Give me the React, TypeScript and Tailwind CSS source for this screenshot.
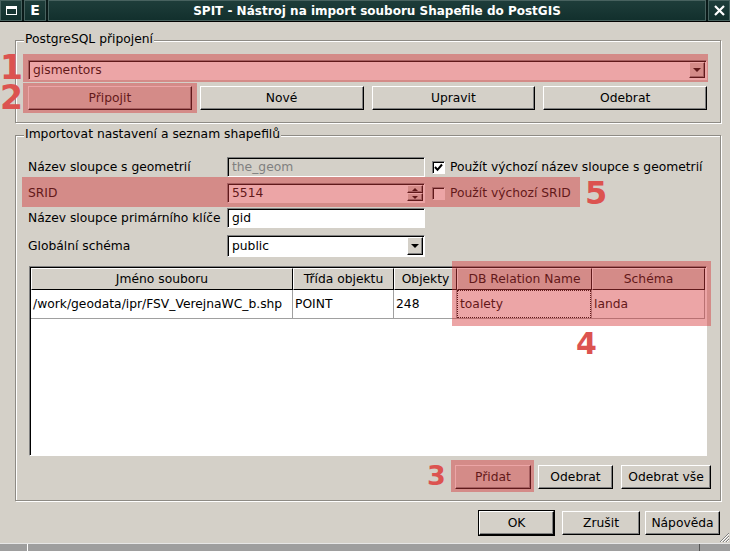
import React from 'react';
import clsx from 'clsx';

// win2k-ish bevels used all over the dialog
const raised =
  'bg-[#d4d0c8] border border-t-white border-l-white border-b-black border-r-black shadow-[inset_-1px_-1px_0_#808080]';
const sunken =
  'border border-t-[#808080] border-l-[#808080] border-b-white border-r-white shadow-[inset_1px_1px_0_#000]';

function Button({ label, className }: { label: string; className?: string }) {
  return (
    <button className={clsx('flex h-[24px] items-center justify-center', raised, className)}>
      {label}
    </button>
  );
}

function DownArrow() {
  return <span className="h-0 w-0 border-x-[4px] border-t-[4px] border-x-transparent border-t-black" />;
}

function Combo({ value, className }: { value: string; className?: string }) {
  return (
    <div className={clsx('flex items-center bg-white p-[1px]', sunken, className)}>
      <span className="flex-1 pl-[3px]">{value}</span>
      <span className={clsx('flex h-full w-[16px] items-center justify-center', raised)}>
        <DownArrow />
      </span>
    </div>
  );
}

function GroupBox({ title, className, children }: { title: string; className?: string; children: React.ReactNode }) {
  return (
    <div
      className={clsx(
        'relative border border-[#8e8b85] shadow-[inset_1px_1px_0_#fff,1px_1px_0_#fff]',
        className
      )}
    >
      <span className="absolute -top-[9px] left-[8px] bg-[#d4d0c8] px-[1px] leading-[15px]">{title}</span>
      {children}
    </div>
  );
}

function Checkbox({ checked }: { checked?: boolean }) {
  return (
    <span className={clsx('flex h-[13px] w-[13px] items-center justify-center bg-white', sunken)}>
      {checked && (
        <svg width="9" height="9" viewBox="0 0 9 9">
          <path d="M1 4 L3.5 6.8 L8 1.5" stroke="#000" strokeWidth="2" fill="none" />
        </svg>
      )}
    </span>
  );
}

const columns = [
  { title: 'Jméno souboru', w: 'w-[262px]', value: '/work/geodata/ipr/FSV_VerejnaWC_b.shp' },
  { title: 'Třída objektu', w: 'w-[101px]', value: 'POINT' },
  { title: 'Objekty', w: 'w-[63px]', value: '248' },
  { title: 'DB Relation Name', w: 'w-[135px]', value: 'toalety', focus: true },
  { title: 'Schéma', w: 'flex-1', value: 'landa' },
];

function Table() {
  return (
    <div className={clsx('ml-[1px] flex h-[190px] flex-col bg-white p-[1px]', sunken)}>
      <div className="flex h-[22px] shrink-0">
        {columns.map((c) => (
          <div
            key={c.title}
            className={clsx('flex items-center justify-center border-t border-l border-white border-r border-b border-r-black border-b-black bg-[#d4d0c8]', c.w)}
          >
            {c.title}
          </div>
        ))}
      </div>
      <div className="flex h-[29px] shrink-0">
        {columns.map((c) => (
          <div key={c.title} className={clsx('border-r border-b border-[#a0a0a0]', c.w)}>
            <div
              className={clsx(
                'flex h-full items-center pl-[2px]',
                c.focus && 'border border-dotted border-black pl-[1px]'
              )}
            >
              {c.value}
            </div>
          </div>
        ))}
      </div>
    </div>
  );
}

function TitleBar() {
  const box = 'h-full border border-[#48625f] bg-gradient-to-b from-[#1e3d3a] to-[#12302d]';
  return (
    <div className="flex h-[22px] gap-[1px] border-b border-black bg-[#0a1a19]">
      <div className={clsx(box, 'flex w-[22px] items-center justify-center')}>
        <span className="h-[9px] w-[11px] border border-t-[3px] border-white" />
      </div>
      <div className={clsx(box, 'ml-[1px] flex w-[22px] items-center justify-center text-[14px] font-bold text-white')}>
        E
      </div>
      <div className={clsx(box, 'ml-[1px] flex flex-1 items-center justify-center text-[12px] font-bold text-white')}>
        SPIT - Nástroj na import souboru Shapefile do PostGIS
      </div>
      <div className={clsx(box, 'ml-[1px] flex w-[22px] items-center justify-center')}>
        <svg width="11" height="11" viewBox="0 0 11 11">
          <path d="M1 1 L10 10 M10 1 L1 10" stroke="#fff" strokeWidth="2.2" />
        </svg>
      </div>
    </div>
  );
}

const overlay = 'pointer-events-none absolute bg-[rgba(212,55,58,0.45)]';
const digit = "pointer-events-none absolute font-['DejaVu_Sans',sans-serif] font-bold text-[#dc5350]";

export default function App() {
  return (
    <div className="relative h-[551px] w-[730px] overflow-hidden bg-[#d4d0c8] font-['DejaVu_Sans',sans-serif] text-[12.3px] text-black">
      <TitleBar />
      <div className="relative h-[521px] pt-[18px] pr-[9px] pl-[15px]">
        <GroupBox title="PostgreSQL připojení" className="h-[83px] pt-[19px] pr-[13px] pb-[12px] pl-[12px]">
          <Combo value="gismentors" className="h-[20px]" />
          <div className="mt-[6px] grid grid-cols-4 gap-[8px]">
            <Button label="Připojit" />
            <Button label="Nové" />
            <Button label="Upravit" />
            <Button label="Odebrat" />
          </div>
        </GroupBox>

        <GroupBox
          title="Importovat nastavení a seznam shapefilů"
          className="mt-[12px] pt-[21px] pr-[13px] pb-[11px] pl-[12px]"
        >
          <div className="flex h-[20px] items-center">
            <span className="w-[199px]">Název sloupce s geometrií</span>
            <div className={clsx('flex h-full w-[198px] items-center pl-[4px] text-[#808080]', sunken)}>the_geom</div>
            <span className="ml-[7px]"><Checkbox checked /></span>
            <span className="ml-[5px]">Použít výchozí název sloupce s geometrií</span>
          </div>
          <div className="mt-[6px] flex h-[20px] items-center">
            <span className="w-[199px]">SRID</span>
            <div className={clsx('flex h-full w-[198px] items-center bg-white p-[1px]', sunken)}>
              <span className="flex-1 pl-[3px]">5514</span>
              <span className="flex h-full w-[16px] flex-col">
                <span className={clsx('flex flex-1 items-center justify-center', raised)}>
                  <span className="h-0 w-0 border-x-[3px] border-b-[3px] border-x-transparent border-b-black" />
                </span>
                <span className={clsx('flex flex-1 items-center justify-center', raised)}>
                  <span className="h-0 w-0 border-x-[3px] border-t-[3px] border-x-transparent border-t-black" />
                </span>
              </span>
            </div>
            <span className="ml-[7px]"><Checkbox /></span>
            <span className="ml-[5px]">Použít výchozí SRID</span>
          </div>
          <div className="mt-[5px] flex h-[20px] items-center">
            <span className="w-[199px]">Název sloupce primárního klíče</span>
            <div className={clsx('flex h-full w-[198px] items-center bg-white pl-[4px]', sunken)}>gid</div>
          </div>
          <div className="mt-[7px] flex h-[22px] items-center">
            <span className="w-[199px]">Globální schéma</span>
            <Combo value="public" className="h-full w-[198px]" />
          </div>

          <div className="mt-[9px]">
            <Table />
          </div>

          <div className="-mr-[4px] mt-[9px] flex justify-end">
            <Button label="Přidat" className="w-[76px]" />
            <Button label="Odebrat" className="ml-[7px] w-[75px]" />
            <Button label="Odebrat vše" className="ml-[8px] w-[90px]" />
          </div>
        </GroupBox>

        <div className="mt-[9px] mr-[1px] flex items-center justify-end">
          <div className="border border-black">
            <Button label="OK" className="w-[75px]" />
          </div>
          <Button label="Zrušit" className="ml-[7px] w-[78px]" />
          <Button label="Nápověda" className="ml-[5px] w-[75px]" />
        </div>

        {/* size grip */}
        <svg className="absolute right-0 bottom-0" width="12" height="12" viewBox="0 0 12 12">
          <path d="M11 2 L2 11 M11 5 L5 11 M11 8 L8 11" stroke="#808080" strokeWidth="1" />
          <path d="M11 3 L3 11 M11 6 L6 11 M11 9 L9 11" stroke="#fff" strokeWidth="1" />
        </svg>
      </div>
      <div className="flex h-[8px] border-t border-[#e6e6e6] bg-[#9e9e9e]">
        <span className="w-[28px] border-r border-white" />
        <span className="w-[672px] border-r border-[#555]" />
      </div>

      {/* annotations */}
      <div className={clsx(overlay, 'top-[54px] left-[23px] h-[28px] w-[685px]')} />
      <div className={clsx(overlay, 'top-[83px] left-[23px] h-[30px] w-[174px]')} />
      <div className={clsx(overlay, 'top-[177px] left-[22px] h-[30px] w-[558px]')} />
      <div className={clsx(overlay, 'top-[261px] left-[452px] h-[65px] w-[259px]')} />
      <div className={clsx(overlay, 'top-[460px] left-[451px] h-[32px] w-[83px]')} />

      <span className={clsx(digit, 'top-[55px] left-[0px] text-[33px] leading-[26px]')}>1</span>
      <span className={clsx(digit, 'top-[85px] left-[0px] text-[33px] leading-[26px]')}>2</span>
      <span className={clsx(digit, 'top-[462px] left-[427px] text-[27px] leading-none')}>3</span>
      <span className={clsx(digit, 'top-[329px] left-[576px] text-[30px] leading-none')}>4</span>
      <span className={clsx(digit, 'top-[177px] left-[585px] text-[32px] leading-none')}>5</span>
    </div>
  );
}
